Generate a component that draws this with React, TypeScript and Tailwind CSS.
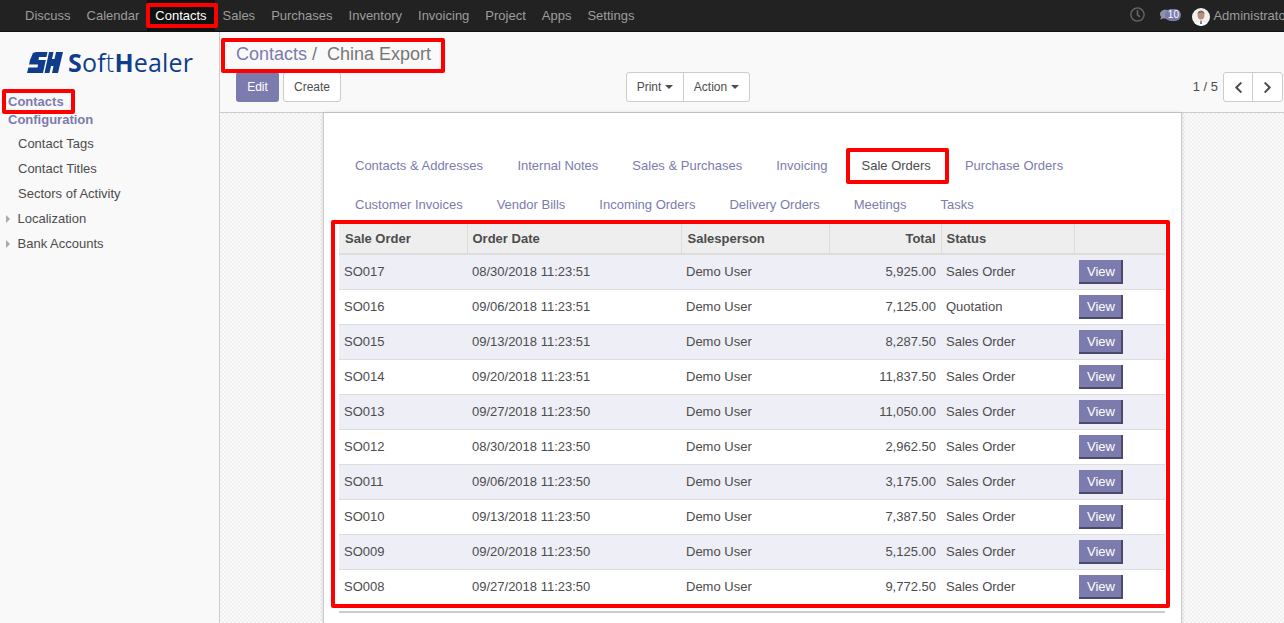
import { FaChevronLeft, FaChevronRight, FaComment, FaRegClock } from 'react-icons/fa'

const navItems = ['Discuss', 'Calendar', 'Contacts', 'Sales', 'Purchases', 'Inventory', 'Invoicing', 'Project', 'Apps', 'Settings']
const tabsTop = ['Contacts & Addresses', 'Internal Notes', 'Sales & Purchases', 'Invoicing', 'Sale Orders', 'Purchase Orders']
const tabsBottom = ['Customer Invoices', 'Vendor Bills', 'Incoming Orders', 'Delivery Orders', 'Meetings', 'Tasks']

const rows = [
  ['SO017', '08/30/2018 11:23:51', '5,925.00', 'Sales Order'],
  ['SO016', '09/06/2018 11:23:51', '7,125.00', 'Quotation'],
  ['SO015', '09/13/2018 11:23:51', '8,287.50', 'Sales Order'],
  ['SO014', '09/20/2018 11:23:51', '11,837.50', 'Sales Order'],
  ['SO013', '09/27/2018 11:23:50', '11,050.00', 'Sales Order'],
  ['SO012', '08/30/2018 11:23:50', '2,962.50', 'Sales Order'],
  ['SO011', '09/06/2018 11:23:50', '3,175.00', 'Sales Order'],
  ['SO010', '09/13/2018 11:23:50', '7,387.50', 'Sales Order'],
  ['SO009', '09/20/2018 11:23:50', '5,125.00', 'Sales Order'],
  ['SO008', '09/27/2018 11:23:50', '9,772.50', 'Sales Order'],
]

function RedBox({ className }: { className: string }) {
  return <div className={`pointer-events-none absolute rounded-[2px] border-4 border-[#f00] ${className}`} />
}

function Caret() {
  return <span className="ml-1 inline-block border-x-4 border-t-4 border-x-transparent border-t-[#4c4c4c] align-middle" />
}

function Logo() {
  return (
    <div className="flex h-[42px] items-center pl-[27px] pt-[18px] text-[#0f3d8c]">
      <svg width="36" height="21" viewBox="0 0 36 21" className="mr-[5px]">
        <polygon points="6,1 9,0 36,0 31,21 0,21 1.5,15 3,8" fill="#0f3d8c" />
        <polygon points="12,5 20.5,5 20,8 11.5,8" fill="#fff" />
        <polygon points="0,12.5 11,12.5 10.5,15.5 0,15.5" fill="#fff" />
        <polygon points="20.5,0 22,0 17.5,21 16,21" fill="#fff" />
        <polygon points="26.5,0 29,0 27.5,7 25,7" fill="#fff" />
        <polygon points="24,14 26.5,14 25,21 22.5,21" fill="#fff" />
      </svg>
      <span className="font-['Open_Sans',sans-serif] text-[25px] leading-[30px] tracking-[0.2px]">
        <b>S</b>of<span className="font-light">t</span><b>H</b>ealer
      </span>
    </div>
  )
}

function Avatar() {
  return (
    <svg width="18" height="18" viewBox="0 0 18 18" className="mr-[3px] mt-[3px]">
      <circle cx="9" cy="9" r="9" fill="#f3efec" />
      <ellipse cx="9" cy="7" rx="3.4" ry="4.6" fill="#b98f78" />
      <path d="M5.4 6 C5.4 1.5 12.6 1.5 12.6 6 C11 4.4 7 4.4 5.4 6 Z" fill="#77706c" />
      <path d="M3.5 16 C4.5 12.5 13.5 12.5 14.5 16 L9 18 Z" fill="#fff" />
      <path d="M8.4 12.6 H9.6 L10 16 H8 Z" fill="#6b6f78" />
    </svg>
  )
}

function TabRow({ items, active, className }: { items: string[]; active?: string; className: string }) {
  return (
    <ul className={`ml-[-0.5px] flex h-[39px] gap-px ${className}`}>
      {items.map((t) => (
        <li key={t} className={`px-[16.5px] pt-[12px] leading-[15px] whitespace-nowrap ${t === active ? 'text-[#4c4c4c]' : 'text-[#7c7bad]'}`}>
          {t}
        </li>
      ))}
    </ul>
  )
}

function ViewButton() {
  return (
    <span className="block h-[24px] w-[44px] border-r-2 border-b-2 border-[#4b4a6e] bg-[#7c7bad] pl-[2px] pt-px text-center leading-[22px] text-white">
      View
    </span>
  )
}

export default function App() {
  return (
    <div className="relative flex h-[623px] w-[1284px] flex-col overflow-hidden bg-white font-['Liberation_Sans',sans-serif] text-[13px] text-[#4c4c4c]">
      <nav className="flex h-[32px] shrink-0 items-stretch border-b border-[#111] bg-[#222] pl-[17px] text-[#9d9d9d]">
        {navItems.map((n) => (
          <span key={n} className={`flex items-center px-2 ${n === 'Contacts' ? 'bg-[#111] text-white' : ''}`}>
            {n}
          </span>
        ))}
        <div className="ml-auto mr-[-6px] flex items-center">
          <FaRegClock className="mr-[15px] mb-[3px] text-[15px] text-[#666]" />
          <span className="relative mr-[11px] flex h-[12px] w-[21px] items-center">
            <FaComment className="mb-[3px] text-[11px] text-[#8d93a6]" />
            <span className="absolute left-[5px] top-[-1px] h-[12px] w-[16px] rounded-full bg-[#7c7bad] text-center text-[10px] leading-[12px] text-white">10</span>
          </span>
          <Avatar />
          <span className="whitespace-nowrap">Administrator</span>
        </div>
      </nav>

      <div className="flex min-h-0 flex-1">
        <aside className="w-[220px] shrink-0 border-r border-[#ccc] bg-[#f9f9f9]">
          <Logo />
          <div className="pt-[19px] pl-[8px] font-bold text-[#7c7bad]">
            <div className="h-[18px] leading-[18px]">Contacts</div>
            <div className="h-[18px] leading-[18px]">Configuration</div>
          </div>
          <ul className="pt-[2px]">
            {['Contact Tags', 'Contact Titles', 'Sectors of Activity'].map((t) => (
              <li key={t} className="h-[25px] pl-[18px] leading-[25px]">{t}</li>
            ))}
            {['Localization', 'Bank Accounts'].map((t) => (
              <li key={t} className="flex h-[25px] items-center pl-[6px] leading-[25px]">
                <span className="mr-[7.5px] border-y-4 border-l-4 border-y-transparent border-l-[#aaa]" />
                {t}
              </li>
            ))}
          </ul>
        </aside>

        <main className="flex min-w-0 flex-1 flex-col">
          <div className="h-[81px] shrink-0 border-b border-[#ccc] bg-[#f9f9f9] pl-[16px] pr-[1px]">
            <div className="h-[40px] pt-[12px] text-[18px] leading-[20px] text-[#777]">
              <span className="text-[#7c7bad]">Contacts</span>
              <span className="text-[#777]"> / </span>
              <span className="ml-[5px]">China Export</span>
            </div>
            <div className="flex h-[30px] items-stretch text-[12px]">
              <button className="w-[43px] rounded-[3px] bg-[#7c7bad] text-white">Edit</button>
              <button className="ml-[4px] w-[58px] rounded-[3px] border border-[#ccc] bg-white">Create</button>
              <div className="ml-[285px] flex rounded-[3px] border border-[#ccc] bg-white">
                <span className="flex w-[57px] items-center justify-center border-r border-[#ccc]">Print<Caret /></span>
                <span className="flex w-[65px] items-center justify-center">Action<Caret /></span>
              </div>
              <span className="ml-auto flex items-center pr-[5px] text-[13px]">1 / 5</span>
              <div className="flex rounded-[3px] border border-[#ccc] bg-white text-[13px] text-[#4c4c4c]">
                <span className="flex w-[29px] items-center justify-center border-r border-[#ccc]"><FaChevronLeft /></span>
                <span className="flex w-[29px] items-center justify-center"><FaChevronRight /></span>
              </div>
            </div>
          </div>

          <div className="min-h-0 flex-1 bg-[repeating-conic-gradient(#f0f0f0_0_25%,#fbfbfb_0_50%)] bg-[length:4px_4px] pl-[103px]">
            <div className="h-full w-[859px] border-x border-[#ccc] bg-white px-[15px] pt-[33px] shadow-[0_0_4px_rgba(0,0,0,0.15)]">
              <TabRow items={tabsTop} active="Sale Orders" className="[&>li:first-child]:mr-[0.5px]" />
              <TabRow items={tabsBottom} className="" />
              <table className="w-[826px] table-fixed border-collapse">
                <colgroup>
                  <col className="w-[128px]" />
                  <col className="w-[214px]" />
                  <col className="w-[148px]" />
                  <col className="w-[112px]" />
                  <col className="w-[133px]" />
                  <col className="w-[91px]" />
                </colgroup>
                <thead>
                  <tr className="h-[30px] border-b-2 border-[#ddd] bg-[#eee] text-left font-bold">
                    <th className="border-r border-[#ddd] pl-[6px]">Sale Order</th>
                    <th className="border-r border-[#ddd] pl-[5px]">Order Date</th>
                    <th className="border-r border-[#ddd] pl-[6px]">Salesperson</th>
                    <th className="border-r border-[#ddd] pr-[5px] text-right">Total</th>
                    <th className="border-r border-[#ddd] pl-[5px]">Status</th>
                    <th />
                  </tr>
                </thead>
                <tbody>
                  {rows.map((r, i) => (
                    <tr key={r[0]} className={`h-[35px] border-b border-[#ddd] ${i % 2 === 0 ? 'bg-[#eeeef6]' : 'bg-white'}`}>
                      <td className="pl-[5px]">{r[0]}</td>
                      <td className="pl-[5px]">{r[1]}</td>
                      <td className="pl-[5px]">Demo User</td>
                      <td className="pr-[5px] text-right">{r[2]}</td>
                      <td className="pl-[5px]">{r[3]}</td>
                      <td className="pl-[5px]"><ViewButton /></td>
                    </tr>
                  ))}
                </tbody>
              </table>
              <div className="mt-[6px] h-[2px] w-[826px] bg-[#ccc]" />
            </div>
          </div>
        </main>
      </div>

      <RedBox className="left-[146px] top-[3px] h-[25px] w-[72px]" />
      <RedBox className="left-[2px] top-[89px] h-[25px] w-[73px]" />
      <RedBox className="left-[221px] top-[38px] h-[35px] w-[224px]" />
      <RedBox className="left-[846px] top-[148px] h-[36px] w-[103px]" />
      <RedBox className="left-[331px] top-[220px] h-[388px] w-[839px]" />
    </div>
  )
}
